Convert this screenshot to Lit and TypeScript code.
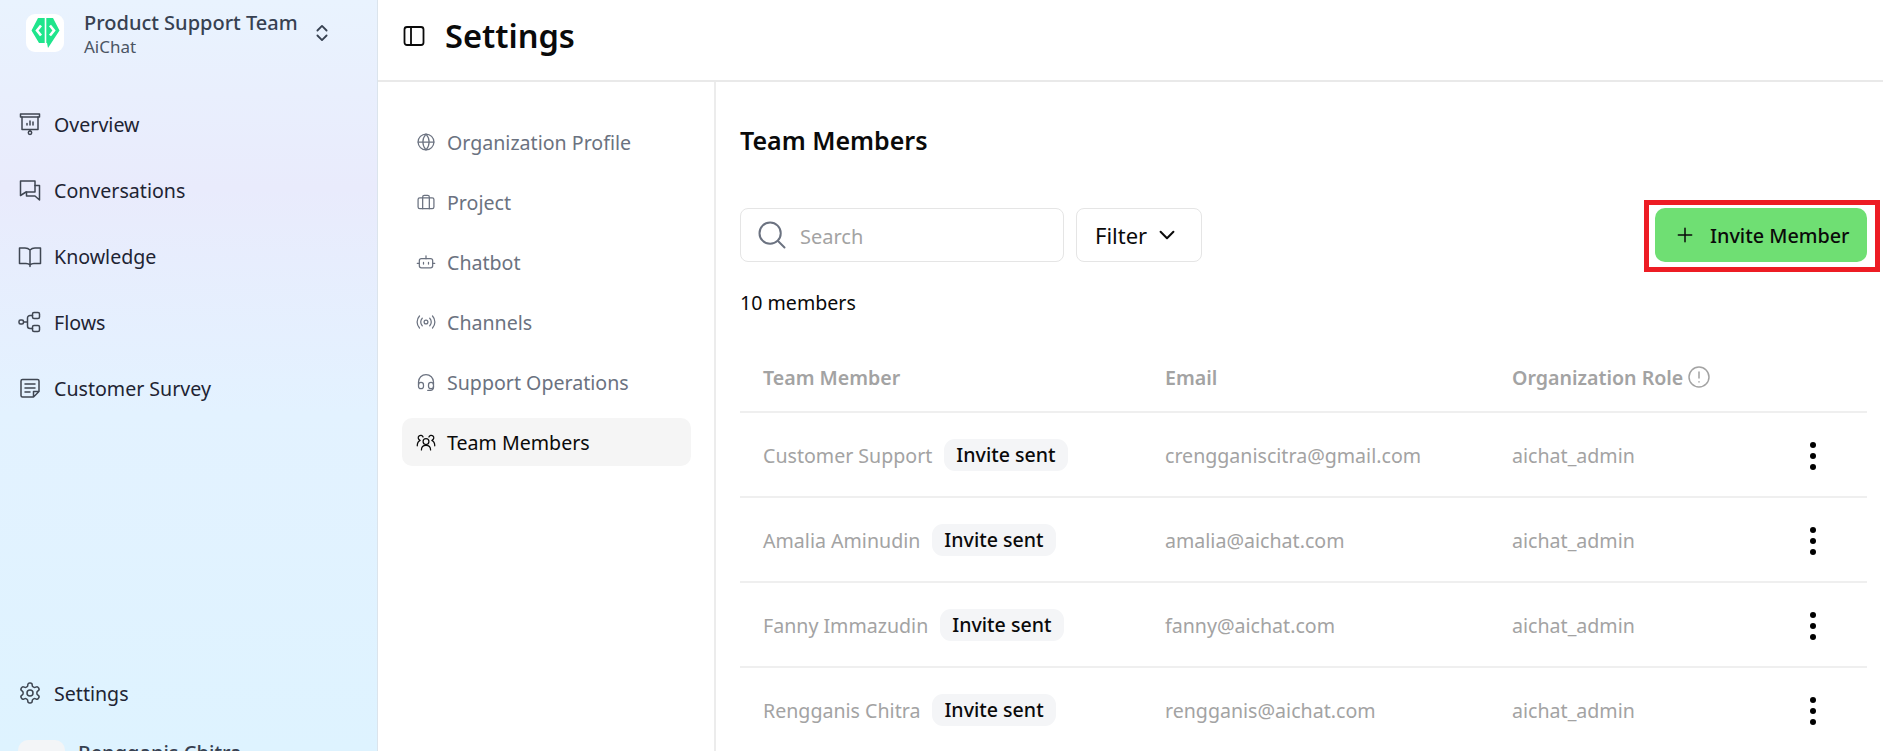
import { LitElement, css, html, svg } from "lit";
import { customElement } from "lit/decorators.js";

const line = (d: unknown, size = 24, width = 1.6) => html`<svg
  width=${size} height=${size} viewBox="0 0 24 24" fill="none" stroke="currentColor"
  stroke-width=${width} stroke-linecap="round" stroke-linejoin="round">${d}</svg>`;

const sideItems = [
  { label: "Overview", icon: svg`<rect x="2.500" y="2" width="19" height="3"/><path d="M4 5v12.500h16V5M12 17.500v1.500"/><circle cx="12" cy="20.700" r="1.700"/><path d="M9 13v-1.500M12 13V9M15 13v-3"/>` },
  { label: "Conversations", icon: svg`<path d="M2.500 3h14.500v11H8l-5.500 3.500z"/><path d="M17 7.500h4.500v14.500l-4.500-4H8.500V14"/>` },
  { label: "Knowledge", icon: svg`<path d="M12 6c-1.500-1.500-3-2-5-2H1.500v15.500H8c2 0 3 .4 4 1.500 1-1.100 2-1.500 4-1.500h6.500V4H17c-2 0-3.500.5-5 2zM12 6v16.500"/>` },
  { label: "Flows", icon: svg`<rect x="1" y="10" width="4.500" height="4" rx="1.500"/><rect x="14.500" y="2.500" width="7" height="6" rx="1.500"/><rect x="14.500" y="15.500" width="7" height="6" rx="1.500"/><path d="M5.500 12h4M14.500 5.500H12a2.500 2.500 0 0 0-2.500 2.500v8a2.500 2.500 0 0 0 2.500 2.500h2.500"/>` },
  { label: "Customer Survey", icon: svg`<path d="M3 5a1.500 1.500 0 0 1 1.500-1.500h15A1.500 1.500 0 0 1 21 5v10.500L15.500 21h-11A1.500 1.500 0 0 1 3 19.500zM21 15.500h-5.500V21M7 8h10M7 12h10M7 16h5"/>` },
];

const settingItems = [
  { label: "Organization Profile", icon: svg`<circle cx="12" cy="12" r="9.500"/><path d="M2.500 12h19M12 2.500c-5 5.500-5 13.500 0 19M12 2.500c5 5.500 5 13.500 0 19"/>` },
  { label: "Project", icon: svg`<rect x="2.500" y="7" width="19" height="13" rx="2"/><path d="M8 20V6a2 2 0 0 1 2-2h4a2 2 0 0 1 2 2v14"/>` },
  { label: "Chatbot", icon: svg`<rect x="4" y="8" width="16" height="11" rx="2.500"/><path d="M12 8V4.500M1.500 13.500H4M20 13.500h2.500M9 12.500v2M15 12.500v2"/>` },
  { label: "Channels", icon: svg`<circle cx="12" cy="12" r="2.300"/><path d="M7.500 7.500a6.500 6.500 0 0 0 0 9M16.500 7.500a6.500 6.500 0 0 1 0 9M4.200 4.800a10.500 10.500 0 0 0 0 14.400M19.800 4.800a10.500 10.500 0 0 1 0 14.400"/>` },
  { label: "Support Operations", icon: svg`<path d="M3 15v-3a9 9 0 0 1 18 0v3"/><rect x="3" y="12.500" width="6" height="7.500" rx="3"/><rect x="15" y="12.500" width="6" height="7.500" rx="3"/><path d="M21 17v1.500a3.500 3.500 0 0 1-3.500 3.500H14"/>` },
  { label: "Team Members", icon: svg`<circle cx="12" cy="11.500" r="3.500"/><path d="M6.500 21.500c0-3.200 2.200-5.500 5.500-5.500s5.500 2.300 5.500 5.500M8.500 6a3 3 0 1 0-4 3.700M15.500 6a3 3 0 1 1 4 3.700M1.500 16.500c0-3 1.300-5.500 3.500-6.500M22.500 16.500c0-3-1.300-5.500-3.500-6.500"/>` },
];

const members = [
  { name: "Customer Support", email: "crengganiscitra@gmail.com" },
  { name: "Amalia Aminudin", email: "amalia@aichat.com" },
  { name: "Fanny Immazudin", email: "fanny@aichat.com" },
  { name: "Rengganis Chitra", email: "rengganis@aichat.com" },
];

const gear = svg`<path d="M12.220 2h-.44a2 2 0 0 0-2 2v.18a2 2 0 0 1-1 1.730l-.43.25a2 2 0 0 1-2 0l-.15-.08a2 2 0 0 0-2.730.73l-.22.38a2 2 0 0 0 .73 2.730l.15.1a2 2 0 0 1 1 1.720v.51a2 2 0 0 1-1 1.740l-.15.09a2 2 0 0 0-.73 2.730l.22.38a2 2 0 0 0 2.730.73l.15-.08a2 2 0 0 1 2 0l.43.25a2 2 0 0 1 1 1.730V20a2 2 0 0 0 2 2h.44a2 2 0 0 0 2-2v-.18a2 2 0 0 1 1-1.730l.43-.25a2 2 0 0 1 2 0l.15.08a2 2 0 0 0 2.730-.73l.22-.39a2 2 0 0 0-.73-2.730l-.15-.08a2 2 0 0 1-1-1.740v-.5a2 2 0 0 1 1-1.740l.15-.09a2 2 0 0 0 .73-2.730l-.22-.38a2 2 0 0 0-2.730-.73l-.15.08a2 2 0 0 1-2 0l-.43-.25a2 2 0 0 1-1-1.730V4a2 2 0 0 0-2-2z"/><circle cx="12" cy="12" r="3"/>`;

@customElement("app-root")
export class AppRoot extends LitElement {
  static styles = css`
    :host {
      display: flex;
      width: 1883px;
      height: 751px;
      overflow: hidden;
      background: #fff;
      color: #0a0a0a;
      font-family: "Noto Sans", sans-serif;
    }

    /* SIDEBAR */
    .sidebar {
      flex: 0 0 378px;
      box-sizing: border-box;
      height: 751px;
      overflow: hidden;
      border-right: 1px solid #dbe4ec;
      background: linear-gradient(180deg, #e9f3fe 0%, #e9ebfc 25%, #e3f2ff 55%, #def3ff 100%);
      color: #1e2433;
    }
    .team {
      display: flex;
      align-items: center;
      box-sizing: border-box;
      height: 66px;
      padding: 0 0 0 26px;
    }
    .logo {
      flex: none;
      width: 38px;
      height: 38px;
      border-radius: 9px;
      background: #fff;
    }
    .team-text {
      flex: none;
      margin-left: 20px;
      padding-top: 2px;
      width: 228px;
    }
    .team-name {
      font-size: 20px;
      font-weight: 500;
      line-height: 26px;
      color: #374151;
      white-space: nowrap;
    }
    .team-sub {
      font-size: 17px;
      line-height: 22px;
      color: #4b5563;
    }
    .updown {
      color: #374151;
      display: flex;
    }
    .side-nav {
      margin-top: 25px;
    }
    .side-item {
      display: flex;
      align-items: center;
      gap: 12px;
      height: 66px;
      padding-left: 18px;
      font-size: 19.6px;
      color: #1e2433;
    }
    .side-item svg {
      color: #3f4652;
      flex: none;
    }
    .side-settings {
      margin-top: 239px;
    }
    .user {
      display: flex;
      align-items: flex-start;
      gap: 13px;
      margin-top: 14px;
      padding-left: 18px;
    }
    .avatar {
      width: 47px;
      height: 47px;
      border-radius: 10px;
      background: #f3f5f7;
    }
    .user-name {
      font-size: 20px;
      font-weight: 500;
      line-height: 26px;
      color: #374151;
    }

    /* MAIN */
    .main {
      flex: 1;
      min-width: 0;
      display: flex;
      flex-direction: column;
    }
    .titlebar {
      flex: none;
      display: flex;
      align-items: center;
      gap: 19px;
      height: 72px;
      box-sizing: content-box;
      padding: 0 0 8px 24px;
      border-bottom: 2px solid #e9e9e9;
    }
    .titlebar h1 {
      margin: 0;
      font-size: 32.600px;
      font-weight: 600;
      line-height: 40px;
      color: #0a0a0a;
    }
    .titlebar svg {
      flex: none;
    }
    .content {
      flex: 1;
      min-height: 0;
      display: flex;
    }

    /* SETTINGS NAV */
    .settings-nav {
      flex: 0 0 289px;
      display: flex;
      flex-direction: column;
      gap: 12px;
      padding: 36px 23px 0 24px;
      border-right: 2px solid #ececec;
    }
    .settings-item {
      display: flex;
      align-items: center;
      gap: 11px;
      height: 48px;
      padding-left: 14px;
      border-radius: 10px;
      font-size: 19.6px;
      color: #6b7280;
    }
    .settings-item svg {
      flex: none;
    }
    .settings-item.active {
      background: #f5f5f5;
      color: #0a0a0a;
    }

    /* PANEL */
    .panel {
      flex: 1;
      min-width: 0;
      padding: 40px 16px 0 24px;
    }
    .panel h2 {
      margin: 0;
      font-size: 25px;
      font-weight: 600;
      line-height: 36px;
    }
    .toolbar {
      display: flex;
      align-items: center;
      gap: 12px;
      margin-top: 50px;
    }
    .search {
      display: flex;
      align-items: center;
      gap: 13px;
      box-sizing: border-box;
      width: 324px;
      height: 54px;
      padding-left: 16px;
      border: 1px solid #e5e5e5;
      border-radius: 8px;
      font-size: 20px;
      color: #a3a3a3;
    }
    .search svg {
      color: #6b7280;
      flex: none;
    }
    .search span {
      padding-top: 2px;
    }
    .filter {
      display: flex;
      align-items: center;
      gap: 9px;
      box-sizing: border-box;
      width: 126px;
      height: 54px;
      padding-left: 18px;
      border: 1px solid #e5e5e5;
      border-radius: 8px;
      font-size: 22px;
      color: #0a0a0a;
    }
    .invite {
      position: relative;
      display: flex;
      align-items: center;
      gap: 15px;
      box-sizing: border-box;
      width: 212px;
      height: 54px;
      margin-left: auto;
      padding-left: 20px;
      border-radius: 10px;
      background: #6fdf73;
      font-size: 19.8px;
      font-weight: 500;
      color: #0a0a0a;
      white-space: nowrap;
    }
    .invite::after {
      content: "";
      position: absolute;
      top: -8px;
      right: -13px;
      bottom: -10px;
      left: -11px;
      border: 5px solid #ed1c24;
    }
    .count {
      margin-top: 29px;
      font-size: 19.6px;
      line-height: 24px;
      color: #0a0a0a;
    }
    .row {
      display: grid;
      grid-template-columns: 402px 347px 245px 1fr;
      align-items: center;
      padding-left: 23px;
      border-bottom: 2px solid #efefef;
      box-sizing: border-box;
    }
    .head {
      height: 70px;
      margin-top: 28px;
      font-size: 19.6px;
      font-weight: 600;
      color: #a3a3a3;
    }
    .role-head {
      display: flex;
      align-items: center;
      gap: 4px;
    }
    .body-row {
      height: 85px;
      padding-top: 2px;
      font-size: 19.6px;
      color: #a3a3a3;
    }
    .who {
      display: flex;
      align-items: center;
      gap: 12px;
    }
    .chip {
      padding: 0 12px;
      height: 32px;
      line-height: 31px;
      border-radius: 11px;
      background: #f4f5f7;
      font-size: 19.6px;
      font-weight: 500;
      color: #0a0a0a;
      margin-top: -1px;
    }
    .dots {
      display: flex;
      flex-direction: column;
      align-items: center;
      gap: 5px;
      padding-left: 2px;
    }
    .dots i {
      width: 6px;
      height: 6px;
      border-radius: 50%;
      background: #000;
    }
  `;

  render() {
    return html`
      <aside class="sidebar">
        <div class="team">
          <svg class="logo" viewBox="0 0 38 38">
            <path fill="#1fe58c" d="M12 4H27L33.500 16.500L22 34L21 29H13L5.500 16.500Z"/>
            <path fill="none" stroke="#fff" stroke-width="1.600" d="M19.500 3V29"/>
            <path fill="none" stroke="#fff" stroke-width="2.600" d="M15 11.500L11 16.500L15 21.500M24 11.500L28 16.500L24 21.500"/>
          </svg>
          <div class="team-text">
            <div class="team-name">Product Support Team</div>
            <div class="team-sub">AiChat</div>
          </div>
          <div class="updown">
            ${line(svg`<path d="M6.500 9L12 3.500L17.500 9M6.500 15L12 20.500L17.500 15"/>`, 20, 2.200)}
          </div>
        </div>

        <nav class="side-nav">
          ${sideItems.map((it) => html`<div class="side-item">${line(it.icon, 24, 1.500)}<span>${it.label}</span></div>`)}
        </nav>

        <div class="side-item side-settings">${line(gear, 24, 1.500)}<span>Settings</span></div>
        <div class="user">
          <div class="avatar"></div>
          <div class="user-name">Rengganis Chitra</div>
        </div>
      </aside>

      <main class="main">
        <header class="titlebar">
          ${line(svg`<rect x="2.500" y="3" width="19" height="18" rx="2.500"/><path d="M9 3v18"/>`, 24, 1.800)}
          <h1>Settings</h1>
        </header>

        <div class="content">
          <nav class="settings-nav">
            ${settingItems.map((it) => html`
              <div class="settings-item ${it.label === "Team Members" ? "active" : ""}">
                ${line(it.icon, 20, 1.500)}<span>${it.label}</span>
              </div>`)}
          </nav>

          <section class="panel">
            <h2>Team Members</h2>

            <div class="toolbar">
              <div class="search">
                ${line(svg`<circle cx="10.500" cy="10.500" r="8.500"/><path d="M17 17l5 5"/>`, 30, 1.600)}
                <span>Search</span>
              </div>
              <div class="filter">
                <span>Filter</span>
                ${line(svg`<path d="M5 8.500l7 7 7-7"/>`, 22, 2.200)}
              </div>
              <div class="invite">
                ${line(svg`<path d="M12 4v16M4 12h16"/>`, 20, 1.800)}
                <span>Invite Member</span>
              </div>
            </div>

            <div class="count">10 members</div>

            <div class="row head">
              <div>Team Member</div>
              <div>Email</div>
              <div class="role-head">
                <span>Organization Role</span>
                ${line(svg`<circle cx="12" cy="12" r="10"/><path d="M12 7v6M12 16.800v.2"/>`, 24, 1.500)}
              </div>
            </div>

            ${members.map((m) => html`
              <div class="row body-row">
                <div class="who"><span>${m.name}</span><span class="chip">Invite sent</span></div>
                <div>${m.email}</div>
                <div>aichat_admin</div>
                <div class="dots"><i></i><i></i><i></i></div>
              </div>`)}
          </section>
        </div>
      </main>
    `;
  }
}
